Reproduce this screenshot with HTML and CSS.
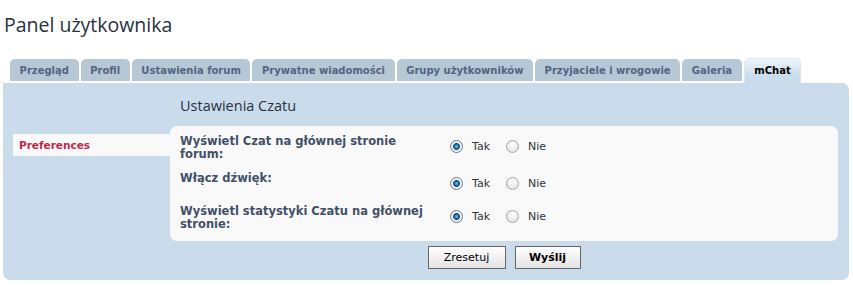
FILE: index.html
```html
<!DOCTYPE html>
<html lang="pl">
<head>
  <meta charset="UTF-8">
  <title>Panel użytkownika - mChat</title>
  <link rel="stylesheet" href="styles.css">
</head>
<body>
  <div class="page">
    <h2 class="page-title">Panel użytkownika</h2>

    <ul class="tabs">
      <li class="tab">Przegląd</li>
      <li class="tab">Profil</li>
      <li class="tab">Ustawienia forum</li>
      <li class="tab">Prywatne wiadomości</li>
      <li class="tab">Grupy użytkowników</li>
      <li class="tab">Przyjaciele i wrogowie</li>
      <li class="tab">Galeria</li>
      <li class="tab active">mChat</li>
    </ul>

    <div class="panel">
      <div class="menu">
        <div class="menu-item">Preferences</div>
      </div>

      <form class="main" id="mchatForm">
        <h3 class="main-title">Ustawienia Czatu</h3>

        <div class="box">
          <div class="row">
            <label class="row-label">Wyświetl Czat na głównej stronie forum:</label>
            <div class="row-value">
              <input type="radio" class="radio" name="mchat_index" checked>
              <span class="opt">Tak</span>
              <input type="radio" class="radio" name="mchat_index">
              <span class="opt">Nie</span>
            </div>
          </div>
          <div class="row">
            <label class="row-label">Włącz dźwięk:</label>
            <div class="row-value">
              <input type="radio" class="radio" name="mchat_sound" checked>
              <span class="opt">Tak</span>
              <input type="radio" class="radio" name="mchat_sound">
              <span class="opt">Nie</span>
            </div>
          </div>
          <div class="row">
            <label class="row-label">Wyświetl statystyki Czatu na głównej stronie:</label>
            <div class="row-value">
              <input type="radio" class="radio" name="mchat_stats" checked>
              <span class="opt">Tak</span>
              <input type="radio" class="radio" name="mchat_stats">
              <span class="opt">Nie</span>
            </div>
          </div>
        </div>

        <div class="buttons">
          <button type="reset" class="btn">Zresetuj</button>
          <button type="submit" class="btn btn-main">Wyślij</button>
        </div>
      </form>
    </div>
  </div>
</body>
</html>
```

FILE: styles.css
```css
/* Panel użytkownika, styl w duchu prosilver */
body {
  margin: 0;
  background: #fff;
  font-family: "DejaVu Sans", Verdana, sans-serif;
  font-size: 11px;
  color: #28313f;
}
.page {
  padding: 0 4px 0 3px;
}
.page-title {
  margin: 0;
  padding: 13px 0 0 1px;
  height: 58px;
  box-sizing: border-box;
  font-family: "Open Sans", sans-serif;
  font-weight: normal;
  font-size: 19.5px;
  line-height: 24px;
  color: #28313f;
}

/* zakładki */
.tabs {
  display: flex;
  align-items: flex-end;
  gap: 2px;
  list-style: none;
  margin: 0 0 0 7px;
  padding: 0;
  height: 25px;
}
.tab {
  height: 22px;
  margin-bottom: 2px;
  padding: 0 9.6px;
  line-height: 23px;
  font-weight: bold;
  font-size: 10px;
  color: #536482;
  background: #b6c7d6;
  border-radius: 5px 5px 0 0;
  white-space: nowrap;
}
.tab.active {
  height: 25px;
  margin-bottom: 0;
  line-height: 24px;
  color: #000;
  background: linear-gradient(#eef3f8, #cadceb 70%);
  border: 1px solid #dde7f0;
  border-bottom: none;
  box-sizing: border-box;
}

/* panel */
.panel {
  display: flex;
  background: #cadceb;
  border-radius: 0 7px 7px 7px;
  padding: 0 11px 11px 10px;
}
.menu {
  width: 157px;
  padding-top: 51px;
}
.menu-item {
  height: 22px;
  line-height: 22px;
  padding-left: 6px;
  background: #f9f9f9;
  color: #bc2a4d;
  font-weight: bold;
  font-size: 10.5px;
}
.main {
  flex: 1;
  display: flex;
  flex-direction: column;
}
.main-title {
  margin: 0;
  height: 43px;
  padding: 13px 0 0 10px;
  box-sizing: border-box;
  font-family: "Open Sans", sans-serif;
  font-weight: normal;
  font-size: 14.5px;
  line-height: 20px;
  color: #28313f;
}
.box {
  background: #f9f9f9;
  border-radius: 7px;
  padding: 9px 10px 10px;
  display: flex;
  flex-direction: column;
  gap: 11px;
}
.row {
  display: flex;
  align-items: flex-start;
}
.row-label {
  width: 252px;
  font-weight: bold;
  font-size: 11.5px;
  line-height: 13px;
  color: #425067;
}
.row-value {
  display: flex;
  align-items: center;
  height: 22px;
  margin-left: 18px;
  color: #333;
  font-size: 11px;
}
.opt {
  margin: 0 16px 0 9px;
}

/* przyciski radio */
.radio {
  appearance: none;
  -webkit-appearance: none;
  margin: 0;
  width: 13px;
  height: 13px;
  border-radius: 50%;
  border: 1px solid #a4a9ad;
  background: radial-gradient(circle at 50% 35%, #fff, #dcdcdc);
  box-sizing: border-box;
}
.radio:checked {
  border-color: #707579;
  background: radial-gradient(circle, #7fc3ea 0, #1c6fa8 2px, #0b4d7c 3px, #e8e8e8 3.8px, #f6f6f6 5px);
}

.buttons {
  display: flex;
  justify-content: center;
  gap: 9px;
  padding-top: 5px;
}
.btn {
  height: 23px;
  min-width: 78px;
  padding: 0 10px;
  font-family: "DejaVu Sans", Verdana, sans-serif;
  font-size: 11px;
  color: #000;
  border: 1px solid #666;
  background: linear-gradient(#fff, #e3e3e3);
  cursor: pointer;
}
.btn-main {
  min-width: 66px;
  font-weight: bold;
}
```
